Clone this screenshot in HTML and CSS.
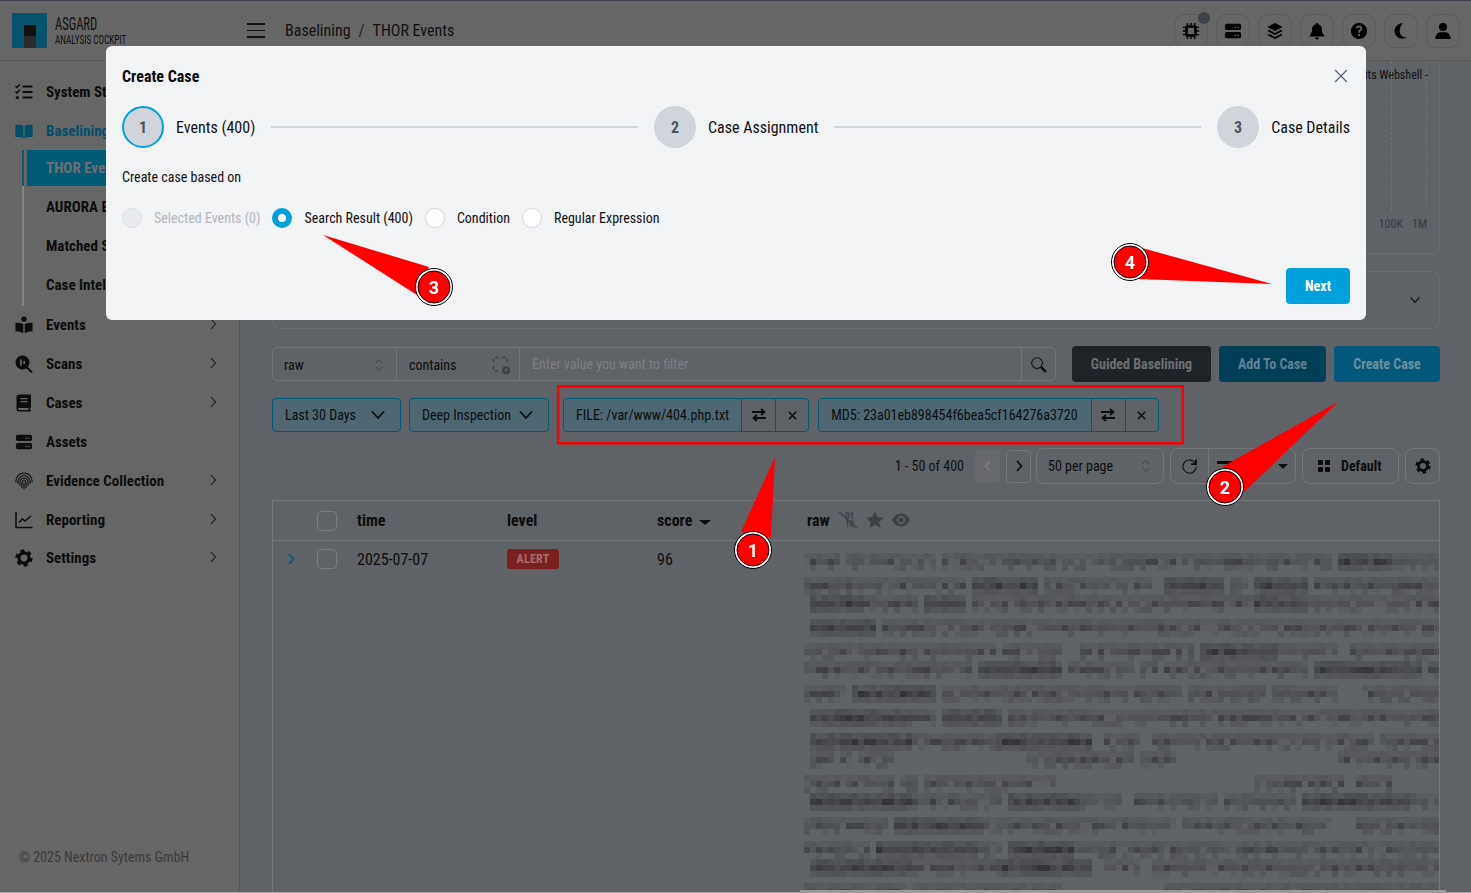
FILE: index.html
```html
<!DOCTYPE html>
<html lang="en">
<head>
  <meta charset="UTF-8" />
  <title>Asgard Analysis Cockpit</title>
  <link rel="stylesheet" href="styles.css">
</head>
<body>

  <!-- shared icons -->
  <svg class="icon-defs" width="0" height="0">
    <symbol id="i-server" viewBox="0 0 20 20">
      <path d="M3 2h14a2 2 0 0 1 2 2v3a2 2 0 0 1-2 2H3a2 2 0 0 1-2-2V4a2 2 0 0 1 2-2zm0 9h14a2 2 0 0 1 2 2v3a2 2 0 0 1-2 2H3a2 2 0 0 1-2-2v-3a2 2 0 0 1 2-2zm9.500-6a.9.9 0 1 0 0 1.800.9.9 0 0 0 0-1.800zm3 0a.9.9 0 1 0 0 1.800.9.9 0 0 0 0-1.800zm-3 9a.9.9 0 1 0 0 1.800.9.9 0 0 0 0-1.800zm3 0a.9.9 0 1 0 0 1.800.9.9 0 0 0 0-1.800z" fill-rule="evenodd"/>
    </symbol>
    <symbol id="i-gear" viewBox="0 0 20 20">
      <circle cx="10" cy="10" r="5.600" fill="none" stroke="currentColor" stroke-width="3.600"/>
      <circle cx="10" cy="10" r="8" fill="none" stroke="currentColor" stroke-width="3.200" stroke-dasharray="4.200 4.180"/>
    </symbol>
    <symbol id="i-swap" viewBox="0 0 16 16">
      <path d="M1 5h12M10 2l3.500 3L10 8M15 11H3M6 8l-3.500 3L6 14" fill="none" stroke="currentColor" stroke-width="1.800"/>
    </symbol>
    <symbol id="i-x" viewBox="0 0 12 12">
      <path d="M2 2l8 8M10 2l-8 8" fill="none" stroke="currentColor" stroke-width="1.600"/>
    </symbol>
    <symbol id="i-updown" viewBox="0 0 8 14">
      <path d="M1 5l3-3.500L7 5M1 9l3 3.500L7 9" fill="none" stroke="currentColor" stroke-width="1"/>
    </symbol>
    <symbol id="i-right" viewBox="0 0 8 12">
      <path d="M2 1l4.500 5L2 11" fill="none" stroke="currentColor"/>
    </symbol>
    <symbol id="i-down" viewBox="0 0 16 10">
      <path d="M2 1.500l6 6.500 6-6.500" fill="none" stroke="currentColor" stroke-width="1.800"/>
    </symbol>
  </svg>

  <header class="topbar">
    <div class="brand">
      <div class="brand-logo"><span class="brand-logo-mark"></span></div>
      <div class="brand-text">
        <div class="brand-name">ASGARD</div>
        <div class="brand-sub">ANALYSIS COCKPIT</div>
      </div>
    </div>
    <div class="hamburger"><span></span><span></span><span></span></div>
    <div class="crumbs">
      <span>Baselining</span><span class="crumb-sep">/</span><span>THOR Events</span>
    </div>
    <div class="top-actions">
      <button class="top-btn has-dot">
        <svg viewBox="0 0 20 20" width="18" height="18"><path d="M6 1v3M10 1v3M14 1v3M6 16v3M10 16v3M14 16v3M1 6h3M1 10h3M1 14h3M16 6h3M16 10h3M16 14h3" stroke="currentColor" stroke-width="1.600"/><rect x="3.500" y="3.500" width="13" height="13" rx="2"/><rect x="6.500" y="6.500" width="7" height="7" fill="#666"/></svg>
      </button>
      <button class="top-btn"><svg width="18" height="18"><use href="#i-server"/></svg></button>
      <button class="top-btn">
        <svg viewBox="0 0 20 20" width="18" height="18"><path d="M10 1l8.500 4.500L10 10 1.500 5.500z"/><path d="M3.500 8.700L1.500 10 10 14.500 18.500 10l-2-1.300L10 12.200z"/><path d="M3.500 13.200l-2 1.300L10 19l8.500-4.500-2-1.300L10 16.700z"/></svg>
      </button>
      <button class="top-btn">
        <svg viewBox="0 0 20 20" width="18" height="18"><path d="M10 1a1.300 1.300 0 0 0-1.300 1.400C6 3 4.500 5.200 4.500 8c0 3.500-.9 5-2.500 6.500V16h16v-1.500C16.400 13 15.500 11.500 15.500 8c0-2.800-1.500-5-4.200-5.600A1.300 1.300 0 0 0 10 1zM7.800 17.200a2.200 2.200 0 0 0 4.400 0z"/></svg>
      </button>
      <button class="top-btn">
        <svg viewBox="0 0 20 20" width="18" height="18"><path fill-rule="evenodd" d="M10 1a9 9 0 1 0 0 18 9 9 0 0 0 0-18zM9 12h2v-1c0-.8 2.700-1.500 2.700-3.800C13.700 5.200 12 4 10 4 8.100 4 6.700 5 6.300 6.800l2 .5c.2-.8.800-1.300 1.700-1.300s1.600.5 1.600 1.300c0 1.200-2.600 1.500-2.600 3.700zm1 1.200a1.300 1.300 0 1 0 0 2.600 1.300 1.300 0 0 0 0-2.600z"/></svg>
      </button>
      <button class="top-btn">
        <svg viewBox="0 0 20 20" width="18" height="18"><path d="M12 1.500a8.500 8.500 0 1 0 4.500 15.200c-.4.100-.9.100-1.300.1-4 0-6.700-3-6.700-6.800 0-3.300 1.600-6 3.500-8.500z"/></svg>
      </button>
      <button class="top-btn">
        <svg viewBox="0 0 20 20" width="18" height="18"><circle cx="10" cy="5.500" r="4.500"/><path d="M1.500 19c0-4.500 2.700-7.500 6-7.500h5c3.300 0 6 3 6 7.500z"/></svg>
      </button>
    </div>
  </header>

  <div class="layout">
    <aside class="sidebar">
      <nav class="nav">
        <a class="nav-item">
          <svg class="nav-icon" viewBox="0 0 18 18"><path d="M7.500 3.500h10M7.500 9h10M7.500 14.500h10" stroke="currentColor" stroke-width="1.800"/><path d="M.5 3l1.500 1.500L5 1.200M.5 8.500L2 10l3-3.300" fill="none" stroke="currentColor" stroke-width="1.400"/><circle cx="2.300" cy="14.500" r="1.600"/></svg>
          <span>System Status</span>
        </a>
        <a class="nav-item nav-item-open">
          <svg class="nav-icon" viewBox="0 0 18 18"><path d="M8.400 3.500v12.700C6.400 15 3.500 14.800.4 15V3C3.500 2.500 6.400 2.500 8.400 3.500zM9.600 3.500v12.700c2-1.200 4.900-1.400 8-1.200V3c-3.100-.5-6-.5-8 .5z"/></svg>
          <span>Baselining</span>
        </a>
        <div class="subnav">
          <a class="sub-item sub-item-active">THOR Events</a>
          <a class="sub-item">AURORA Events</a>
          <a class="sub-item">Matched Signatures</a>
          <a class="sub-item">Case Intelligence</a>
        </div>
        <a class="nav-item">
          <svg class="nav-icon" viewBox="0 0 18 18"><circle cx="9" cy="3.200" r="2.700"/><path d="M8.300 8.300C6.300 7 3.500 6.600.5 6.800v8.700c3 0 5.800.4 7.800 1.700zM9.700 8.300c2-1.300 4.800-1.700 7.800-1.500v8.700c-3 0-5.800.4-7.800 1.700z"/></svg>
          <span>Events</span>
          <svg class="nav-arrow"><use href="#i-right"/></svg>
        </a>
        <a class="nav-item">
          <svg class="nav-icon" viewBox="0 0 18 18"><path fill-rule="evenodd" d="M7.500.5a7 7 0 1 0 0 14 7 7 0 0 0 0-14zM5 4.500v6h1.700v-6zm3.300 1.500v3H10V6z"/><path d="M11.500 12l5.500 5.500" stroke="currentColor" stroke-width="2"/></svg>
          <span>Scans</span>
          <svg class="nav-arrow"><use href="#i-right"/></svg>
        </a>
        <a class="nav-item">
          <svg class="nav-icon" viewBox="0 0 18 18"><path fill-rule="evenodd" d="M4 .5h11a1 1 0 0 1 1 1V13a1 1 0 0 1-1 1v2h1v1.500H4A2.500 2.500 0 0 1 1.500 15V3A2.500 2.500 0 0 1 4 .5zM5.500 4v1.300h7V4zm0 3v1.300h7V7zM4 14a1 1 0 0 0 0 2h9.500v-2z"/></svg>
          <span>Cases</span>
          <svg class="nav-arrow"><use href="#i-right"/></svg>
        </a>
        <a class="nav-item">
          <svg class="nav-icon" viewBox="0 0 20 20"><use href="#i-server"/></svg>
          <span>Assets</span>
        </a>
        <a class="nav-item">
          <svg class="nav-icon" viewBox="0 0 18 18" fill="none" stroke="currentColor" stroke-width="1.100"><path d="M.8 10.500C.5 5 4 1 9 1s8.500 4 8.200 9.500M3 12c-.5-4.500 2-8.500 6-8.500s6.500 4 6 8.500M5 14c-.5-5 .5-8.300 4-8.300s4.500 3.300 4 8.300M7 16c0-3.500-.5-8 2-8s2 4.500 2 8M9 10.500v7"/></svg>
          <span>Evidence Collection</span>
          <svg class="nav-arrow"><use href="#i-right"/></svg>
        </a>
        <a class="nav-item">
          <svg class="nav-icon" viewBox="0 0 18 18" fill="none" stroke="currentColor"><path d="M1 1v15.500h16.500" stroke-width="1.500"/><path d="M4 11.500l3.500-3.500 2.500 2 6-5" stroke-width="1.500"/></svg>
          <span>Reporting</span>
          <svg class="nav-arrow"><use href="#i-right"/></svg>
        </a>
        <a class="nav-item nav-item-last">
          <svg class="nav-icon" viewBox="0 0 20 20"><use href="#i-gear"/></svg>
          <span>Settings</span>
          <svg class="nav-arrow"><use href="#i-right"/></svg>
        </a>
      </nav>
      <div class="sidebar-foot">© 2025 Nextron Sytems GmbH</div>
    </aside>

    <main class="main">
      <section class="card card-chart">
        <div class="chart">
          <div class="chart-title">Exploits Webshell -</div>
          <div class="chart-lines"><i></i><i></i></div>
          <div class="chart-axis"><span>100K</span><span>1M</span></div>
        </div>
      </section>
      <section class="card card-collapsed">
        <svg class="card-toggle"><use href="#i-down"/></svg>
      </section>

      <div class="filter-row">
        <div class="search-group">
          <div class="search-field field-column">
            <span>raw</span>
            <svg class="updown"><use href="#i-updown"/></svg>
          </div>
          <div class="search-field field-op">
            <span>contains</span>
            <svg class="field-add" viewBox="0 0 18 18" fill="none" stroke="currentColor"><path d="M6 1.500H3.500a2 2 0 0 0-2 2V6M10 1.500h2.500a2 2 0 0 1 2 2V6M1.500 10v2.500a2 2 0 0 0 2 2H6" stroke-width="1.400" stroke-dasharray="3 1.500"/><circle cx="13.500" cy="13.500" r="3.800" fill="currentColor" stroke="none"/><path d="M13.500 11.500v4M11.500 13.500h4" stroke="#5f6266" stroke-width="1"/></svg>
          </div>
          <div class="search-input">Enter value you want to filter</div>
          <div class="search-btn">
            <svg viewBox="0 0 18 18" width="17" height="17" fill="none" stroke="#0d0d0d" stroke-width="2.100"><circle cx="7.500" cy="7.500" r="5.700"/><path d="M11.800 11.800l5 5" stroke-width="2.400"/></svg>
          </div>
        </div>
        <button class="btn btn-dark btn-guided">Guided Baselining</button>
        <button class="btn btn-add">Add To Case</button>
        <button class="btn btn-create">Create Case</button>
      </div>

      <div class="pill-row">
        <div class="pill pill-range">Last 30 Days <svg class="pill-caret"><use href="#i-down"/></svg></div>
        <div class="pill pill-mode">Deep Inspection <svg class="pill-caret"><use href="#i-down"/></svg></div>
        <div class="chip chip-first">
          <span class="chip-text">FILE: /var/www/404.php.txt</span>
          <span class="chip-act"><svg width="16" height="16"><use href="#i-swap"/></svg></span>
          <span class="chip-act"><svg width="11" height="11"><use href="#i-x"/></svg></span>
        </div>
        <div class="chip chip-md5">
          <span class="chip-text">MD5: 23a01eb898454f6bea5cf164276a3720</span>
          <span class="chip-act"><svg width="16" height="16"><use href="#i-swap"/></svg></span>
          <span class="chip-act"><svg width="11" height="11"><use href="#i-x"/></svg></span>
        </div>
      </div>

      <div class="pager-row">
        <span class="pager-count">1 - 50 of 400</span>
        <span class="pager-btn pager-prev"><svg width="8" height="12"><use href="#i-right"/></svg></span>
        <span class="pager-btn pager-next"><svg width="8" height="12"><use href="#i-right"/></svg></span>
        <div class="pager-select"><span>50 per page</span><svg class="updown"><use href="#i-updown"/></svg></div>
        <div class="tool-group">
          <span class="tool-refresh">
            <svg viewBox="0 0 18 18" width="17" height="17" fill="none" stroke="#0d0d0d" stroke-width="2.300"><path d="M15 5.500A7 7 0 1 0 16 9"/><path d="M15.800 1.500v5h-5" stroke-width="2"/></svg>
          </span>
          <span class="tool-columns">
            <svg viewBox="0 0 16 10" width="16" height="10"><rect y="0" width="16" height="3"/></svg>
            <svg viewBox="0 0 10 10" width="10" height="10"><path d="M5 0l5 5-5 5-5-5z"/></svg>
            <i class="caret"></i>
          </span>
        </div>
        <div class="tool-default">
          <svg viewBox="0 0 12 12" width="12" height="12"><rect width="5" height="5" rx="1"/><rect x="7" width="5" height="5" rx="1"/><rect y="7" width="5" height="5" rx="1"/><rect x="7" y="7" width="5" height="5" rx="1"/></svg>
          <span>Default</span>
        </div>
        <div class="tool-gear"><svg width="16" height="16"><use href="#i-gear"/></svg></div>
      </div>

      <div class="table">
        <div class="table-row table-head">
          <span></span>
          <span class="check"></span>
          <span>time</span>
          <span>level</span>
          <span class="th-score">score <i class="caret caret-score"></i></span>
          <span class="th-raw">raw
            <svg viewBox="0 0 20 18" width="20" height="18"><text class="binary" x="7" y="8">01</text><text class="binary" x="7" y="16">10</text><path d="M1 1l18 16" stroke="#3f4245" stroke-width="1.300"/></svg>
            <svg viewBox="0 0 18 18" width="18" height="18"><path d="M9 .5l2.600 5.500 6 .8-4.400 4.200 1.100 6L9 14.100 3.700 17l1.100-6L.4 6.800l6-.8z"/></svg>
            <svg viewBox="0 0 18 14" width="18" height="14"><path fill-rule="evenodd" d="M9 .5C4.500.5 1.500 4 .3 7c1.200 3 4.200 6.500 8.700 6.500s7.500-3.500 8.700-6.500C16.500 4 13.500.5 9 .5zm0 2.300a4.200 4.200 0 1 1 0 8.400 4.200 4.200 0 0 1 0-8.400z"/><circle cx="9" cy="7" r="2.500"/></svg>
          </span>
        </div>
        <div class="table-row table-data">
          <svg class="row-toggle" width="8" height="12"><use href="#i-right"/></svg>
          <span class="check"></span>
          <span class="cell-text">2025-07-07</span>
          <span><b class="badge">ALERT</b></span>
          <span class="cell-text">96</span>
          <canvas id="rawBlur" class="raw-blur" width="106" height="58"></canvas>
        </div>
      </div>
    </main>
  </div>

  <div class="edge-thin"></div>
  <div class="edge-thick"></div>

  <!-- Create Case Modal -->
  <div class="modal">
    <svg class="modal-close" width="14" height="14" viewBox="0 0 12 12"><path d="M1 1l10 10M11 1L1 11" fill="none" stroke="currentColor" stroke-width="1.100"/></svg>
    <h3 class="modal-title">Create Case</h3>
    <div class="stepper">
      <span class="step-num step-num-active">1</span>
      <span class="step-label">Events (400)</span>
      <span class="step-line"></span>
      <span class="step-num">2</span>
      <span class="step-label">Case Assignment</span>
      <span class="step-line"></span>
      <span class="step-num">3</span>
      <span class="step-label">Case Details</span>
    </div>
    <div class="based-on">Create case based on</div>
    <div class="radios">
      <label class="radio radio-disabled"><input type="radio" name="basis" disabled><span>Selected Events (0)</span></label>
      <label class="radio"><input type="radio" name="basis" checked><span>Search Result (400)</span></label>
      <label class="radio"><input type="radio" name="basis"><span>Condition</span></label>
      <label class="radio"><input type="radio" name="basis"><span>Regular Expression</span></label>
    </div>
    <div class="modal-foot"><button class="btn-next">Next</button></div>
  </div>

  <!-- Red screenshot annotations -->
  <svg class="notes" width="1471" height="893">
    <rect x="558.200" y="386.200" width="624.600" height="57" fill="none" stroke="#f00" stroke-width="2.500"/>
    <polygon points="775,457 741,532 771,538" fill="#f00"/>
    <polygon points="1338,402 1222,467 1244,492" fill="#f00"/>
    <polygon points="323,235 429,267 417,295" fill="#f00"/>
    <polygon points="1272,284 1142,248 1138,279" fill="#f00"/>
    <g class="note-badge"><circle cx="753" cy="550" r="18.500"/><circle class="core" cx="753" cy="550" r="16"/><text x="753" y="557">1</text></g>
    <g class="note-badge"><circle cx="1225" cy="487" r="18.500"/><circle class="core" cx="1225" cy="487" r="16"/><text x="1225" y="494">2</text></g>
    <g class="note-badge"><circle cx="434" cy="287" r="18.500"/><circle class="core" cx="434" cy="287" r="16"/><text x="434" y="294">3</text></g>
    <g class="note-badge"><circle cx="1130" cy="262" r="18.500"/><circle class="core" cx="1130" cy="262" r="16"/><text x="1130" y="269">4</text></g>
  </svg>

  <script src="script.js"></script>
</body>
</html>
```
FILE: styles.css
```css
* { box-sizing: border-box; }
body { margin: 0; width: 1471px; height: 893px; overflow: hidden; background: #5f6266; color: #0d0d0d; font-family: "Roboto Condensed", Roboto, sans-serif; font-size: 14px; }
button { font-family: inherit; cursor: pointer; }
svg { display: block; stroke-width: 1.100; }
svg:not([fill]) { fill: currentColor; }
.icon-defs { position: absolute; }

.topbar { height: 61px; background: #666; border-top: 1px solid #3d4048; border-bottom: 1px solid #5a5a5a; display: flex; align-items: center; padding: 0 11px 0 12px; }
.brand { width: 235px; display: flex; align-items: center; gap: 8px; }
.brand-logo { width: 35px; height: 35px; background: #07546c; display: flex; justify-content: center; align-items: flex-end; }
.brand-logo-mark { width: 12px; height: 23px; background: linear-gradient(#111 50%, #2b2b2b 50%); }
.brand-text { color: #111; width: 71px; margin-top: -1px; }
.brand-name { font-size: 19px; line-height: 19px; transform: scaleX(.66); transform-origin: left; }
.brand-sub { font-size: 13.500px; line-height: 13px; white-space: nowrap; transform: scaleX(.68); transform-origin: left; }
.hamburger { width: 18px; display: flex; flex-direction: column; gap: 5px; margin-right: 20px; }
.hamburger span { height: 1.500px; background: #111; }
.crumbs { font-size: 16px; display: flex; gap: 8px; color: #111; }
.crumb-sep { color: #222; }
.top-actions { margin-left: auto; display: flex; gap: 8px; }
.top-btn { width: 34px; height: 34px; padding: 0; background: transparent; border: 1px solid #5b5b5b; border-radius: 10px; display: flex; align-items: center; justify-content: center; color: #000; position: relative; }
.has-dot::after { content: ""; position: absolute; top: -3px; right: -3px; width: 12px; height: 12px; border-radius: 50%; background: #3f4347; }

.layout { display: flex; height: 832px; }
.sidebar { width: 240px; flex: none; background: #666; border-right: 1px solid #5a5a5a; display: flex; flex-direction: column; }
.nav { padding-top: 11.500px; }
.nav-item { height: 39px; padding: 0 22px 0 15px; display: flex; align-items: center; gap: 13px; font-size: 15px; font-weight: 700; color: #0d0d0d; }
.nav-icon { width: 18px; height: 18px; flex: none; }
.nav-arrow { width: 8px; height: 12px; margin: -2px 0 0 auto; color: #1a1a1a; }
.nav-item-open { color: #00506c; }
.nav-item-last { margin-top: -1px; }
.subnav { margin: -1px 0 0 22px; padding: 0 0 3px 3px; border-left: 2px solid #828486; width: 208px; }
.sub-item { display: flex; align-items: center; height: 36px; padding-left: 19px; margin-bottom: 3px; font-size: 15px; font-weight: 700; white-space: nowrap; position: relative; }
.sub-item:last-child { margin-bottom: 0; }
.sub-item-active { background: #005a78; color: #707070; }
.sub-item-active::before { content: ""; position: absolute; left: -5px; top: 0; bottom: 0; width: 2px; background: #005a78; }
.sidebar-foot { margin-top: auto; padding: 0 0 28px 19px; color: #3c3c3c; font-size: 14px; line-height: 16px; }

.main { flex: 1; min-width: 0; padding: 0 31px 0 32px; overflow: hidden; }
.card { border: 1px solid #696c6f; border-radius: 8px; }
.card-chart { height: 193px; border-top: none; border-radius: 0 0 8px 8px; display: flex; justify-content: flex-end; margin-bottom: 17px; }
.chart { width: 70px; margin-right: 11px; display: flex; flex-direction: column; align-items: flex-end; }
.chart-title { font-size: 12px; line-height: 14px; margin-top: 7px; white-space: nowrap; color: #111; height: 14px; }
.chart-lines { width: 36px; margin: -21px 1px 0 0; height: 150px; display: flex; justify-content: space-between; }
.chart-lines i { border-left: 1px dashed #6f7275; }
.chart-axis { width: 60px; display: flex; justify-content: flex-end; gap: 9px; margin: 6px 1px 0 0; font-size: 12px; color: #3a3d40; line-height: 14px; }
.card-collapsed { height: 58px; margin-bottom: 17px; display: flex; align-items: center; justify-content: flex-end; padding-right: 18px; }
.card-toggle { width: 12px; height: 8px; color: #1a1a1a; }

.filter-row { height: 36px; display: flex; align-items: center; gap: 8px; }
.search-group { flex: 1; height: 34px; margin-right: 8px; display: flex; border: 1px solid #737679; border-radius: 4px; }
.search-field { display: flex; align-items: center; justify-content: space-between; border-right: 1px solid #737679; padding: 2px 0 0 11px; }
.field-column { width: 124px; padding-right: 13px; }
.field-op { width: 123px; padding-left: 12px; padding-right: 8px; }
.updown { width: 8px; height: 14px; color: #3f4245; }
.field-add { width: 19px; height: 19px; color: #3f4245; }
.search-input { flex: 1; display: flex; align-items: center; padding-left: 12px; color: #7c7f82; border-right: 1px solid #737679; }
.search-btn { width: 33px; display: flex; align-items: center; justify-content: center; }
.btn { height: 36px; border: none; border-radius: 4px; font-size: 14px; font-weight: 700; padding: 0; }
.btn-guided { width: 139px; background: #1e2327; color: #6c6e71; }
.btn-add { width: 107px; background: #013f59; color: #5f8294; }
.btn-create { width: 106px; background: #02577a; color: #6d90a0; }

.pill-row { margin-top: 16px; height: 34px; display: flex; gap: 8px; }
.pill { background: #4e6772; border: 1px solid #005a78; border-radius: 4px; display: flex; align-items: center; justify-content: space-between; padding: 0 14px 0 12px; }
.pill-range { width: 129px; }
.pill-mode { width: 140px; margin-right: 6px; }
.pill-caret { width: 16px; height: 10px; }
.chip { display: flex; border: 1px solid #005a78; border-radius: 4px; margin-left: 1px; }
.chip-first { margin-left: 0; }
.chip-text { background: #4e6772; padding: 0 12px; display: flex; align-items: center; border-radius: 3px 0 0 3px; white-space: nowrap; }
.chip-md5 .chip-text { padding-right: 13px; }
.chip-act { width: 34px; display: flex; align-items: center; justify-content: center; border-left: 1px solid #005a78; }
.chip-act:last-child { width: 33px; }

.pager-row { margin-top: 16px; height: 36px; display: flex; justify-content: flex-end; align-items: center; gap: 6px; }
.pager-count { margin-right: 5px; color: #111; }
.pager-btn { width: 25px; height: 33px; border: 1px solid #74777a; border-radius: 4px; display: flex; align-items: center; justify-content: center; }
.pager-prev { background: #66686b; border-color: #66686b; color: #7d7f82; }
.pager-prev svg { transform: scaleX(-1); }
.pager-btn svg { stroke-width: 1.600; }
.pager-next { margin-right: -1px; }
.pager-select { width: 128px; height: 36px; border: 1px solid #74777a; border-radius: 8px; display: flex; align-items: center; justify-content: space-between; padding: 0 13px 0 11px; }
.tool-group { width: 126px; height: 36px; border: 1px solid #74777a; border-radius: 8px; display: flex; }
.tool-refresh { width: 38px; border-right: 1px solid #74777a; display: flex; align-items: center; justify-content: center; }
.tool-columns { flex: 1; display: flex; align-items: center; justify-content: space-between; padding: 0 7px 0 8px; color: #0d0d0d; }
.caret { width: 0; height: 0; border: 5px solid transparent; border-top: 5px solid #0d0d0d; border-bottom: 0; display: inline-block; }
.tool-default { width: 97px; height: 36px; border: 1px solid #74777a; border-radius: 8px; display: flex; align-items: center; gap: 11px; padding-left: 15px; font-weight: 700; }
.tool-gear { width: 35px; height: 36px; border: 1px solid #74777a; border-radius: 8px; display: flex; align-items: center; justify-content: center; }

.table { margin-top: 16px; height: 393px; border: 1px solid #76787b; border-bottom: none; overflow: hidden; font-size: 16px; }
.table-row { display: grid; grid-template-columns: 44px 40px 150px 150px 150px 1fr; }
.table-head { height: 40px; align-items: center; font-weight: 700; border-bottom: 1px solid #74777a; }
.check { width: 20px; height: 20px; border: 1px solid #797c7f; border-radius: 4px; display: block; }
.th-score { display: flex; align-items: center; gap: 7px; }
.caret-score { margin-top: 4px; border-width: 6px; border-top-width: 5px; border-bottom: 0; }
.th-raw { display: flex; align-items: center; gap: 8px; margin-top: -1px; }
.th-raw svg { color: #3f4245; }
.binary { font-size: 9px; font-weight: 700; fill: #3f4245; }
.table-data { align-items: start; padding-top: 8px; line-height: 20px; }
.cell-text { padding-top: 1px; }
.row-toggle { margin: 4px 0 0 14px; color: #005a78; stroke-width: 1.800; }
.badge { display: block; width: 52px; height: 20px; border-radius: 3px; background: #7a2020; color: #a56c6c; font-size: 12px; line-height: 20px; text-align: center; letter-spacing: .3px; }
.raw-blur { width: 636px; height: 348px; margin: -2px 0 0 -3px; image-rendering: pixelated; display: block; }

.edge-thin { position: absolute; left: 0; right: 0; bottom: 0; height: 1px; background: #a3a3a3; }
.edge-thick { position: absolute; left: 800px; width: 646px; bottom: 0; height: 3px; background: #9a9a9a; }

.modal { position: absolute; left: 106px; top: 46px; width: 1260px; height: 274px; padding: 21px 16px 0; background: #f2f3f5; border-radius: 6px; color: #111; }
.modal-close { position: absolute; top: 23px; right: 18px; color: #4b5563; }
.modal-title { margin: 0; font-size: 16px; line-height: 20px; font-weight: 700; color: #0a0a0a; }
.stepper { margin-top: 19px; height: 42px; display: flex; align-items: center; }
.step-num { width: 42px; height: 42px; flex: none; border-radius: 50%; background: #d1d5db; color: #4b5563; font-size: 16px; font-weight: 700; display: flex; align-items: center; justify-content: center; }
.step-num-active { border: 2px solid #00a0dc; }
.step-label { font-size: 16px; margin: 0 16px 0 12px; white-space: nowrap; }
.step-label:last-child { margin-right: 0; }
.step-line { flex: 1; height: 2px; background: #d1d5db; margin-right: 16px; }
.based-on { margin-top: 19px; line-height: 20px; }
.radios { margin-top: 21px; display: flex; gap: 12px; }
.radio { display: flex; align-items: center; gap: 12px; }
.radio input { appearance: none; margin: 0; width: 20px; height: 20px; border-radius: 50%; background: #fff; border: 1px solid #d1d5db; }
.radio input:checked { border: 6.500px solid #00a0dc; }
.radio-disabled input { background: #e8eaee; border-color: #dcdfe3; }
.radio-disabled span { color: #b4b8be; }
.modal-foot { margin-top: 40px; display: flex; justify-content: flex-end; }
.btn-next { width: 64px; height: 36px; border: none; border-radius: 4px; background: #00a0dc; color: #fff; font-size: 14px; font-weight: 700; }

.notes { position: absolute; left: 0; top: 0; }
.note-badge circle { fill: #fff; stroke: #000; stroke-width: 1; }
.note-badge .core { fill: #f00; }
.note-badge text { fill: #fff; font: 700 18px Roboto, sans-serif; text-anchor: middle; }
```
FILE: script.js
```js
// pixelated "redacted" text in the raw column. Numbers are [from, to, dark] on a 1568 wide scale
const blurRows = [
  [57, [[15,75],[110,135],[155,310],[325,1040],[1060,1225],[1260,1365,1],[1385,1490]]],
  [120, [[15,150],[170,370],[395,545,1],[565,815],[845,970,1],[1000,1030],[1060,1170,1],[1200,1490]]],
  [185, [[25,130,1],[155,265],[295,380,1],[408,1040],[1060,1170,1],[1190,1490]]],
  [255, [[25,165,1],[195,1450],[1470,1495]]],
  [318, [[15,450],[470,600],[650,900],[930,1100,1],[1115,1250],[1290,1480]]],
  [383, [[15,40],[55,210],[225,390],[410,600,1],[620,760],[800,820],[845,1170],[1200,1440,1],[1470,1495]]],
  [452, [[15,95],[125,305,1],[325,405],[420,505],[520,885],[905,915],[930,1075],[1100,1250],[1310,1395],[1410,1495]]],
  [517, [[25,250,1],[265,310],[335,465,1],[480,1450],[1470,1495]]],
  [585, [[25,250,1],[265,450],[465,675,1],[705,775],[820,1325],[1350,1490]]],
  [652, [[25,70],[95,110],[135,210],[535,760],[790,860],[1255,1490]]],
  [717, [[15,70],[85,210],[240,265],[295,405],[420,590],[1060,1255],[1300,1370]]],
  [782, [[25,250,1],[265,465],[490,635,1],[660,740],[775,960],[985,1145],[1175,1410,1],[1425,1495]]],
  [850, [[15,95],[110,195],[225,405,1],[420,505],[520,860],[890,900],[915,1060],[1075,1225],[1295,1370],[1385,1495]]],
  [915, [[15,155],[180,405,1],[420,465],[490,620,1],[635,1495]]],
  [980, [[25,250,1],[265,450],[465,675,1],[705,775],[820,1000],[1015,1295],[1310,1495]]],
  [1040, [[15,240],[265,605],[845,1495]]]
];

const blurCanvas = document.getElementById('rawBlur');
const blurCtx = blurCanvas.getContext('2d');
const blurCell = 6;
const blurLeft = 804, blurTop = 546;
let blurSeed = 7;

function rnd() {
  blurSeed = (blurSeed * 16807) % 2147483647;
  return blurSeed / 2147483647;
}

function shade(x, y, amount) {
  const r = Math.round(96 - amount), g = Math.round(98 - amount), b = Math.round(101 - amount);
  blurCtx.fillStyle = `rgb(${r},${g},${b})`;
  blurCtx.fillRect(x, y, 1, 1);
}

blurCtx.fillStyle = '#5f6266';
blurCtx.fillRect(0, 0, blurCanvas.width, blurCanvas.height);

blurRows.forEach(([zy, parts]) => {
  const cy = Math.round((540 + zy / 3 - blurTop) / blurCell) - 1;
  parts.forEach(([a, b, dark]) => {
    const x0 = Math.round((800 + a / 2.337 - blurLeft) / blurCell);
    const x1 = Math.round((800 + b / 2.337 - blurLeft) / blurCell);
    for (let x = x0; x <= x1; x++) {
      const base = dark ? 20 : 11;
      const spike = rnd() > 0.72 ? 14 : 0;
      const gap = !dark && rnd() > 0.86;
      shade(x, cy, base * 0.5 + rnd() * base * 0.6);
      shade(x, cy + 1, gap ? 3 : base + rnd() * base * 0.7 + spike);
      if (dark || rnd() > 0.55) shade(x, cy + 2, base * 0.4 + rnd() * 9);
    }
  });
});
```
